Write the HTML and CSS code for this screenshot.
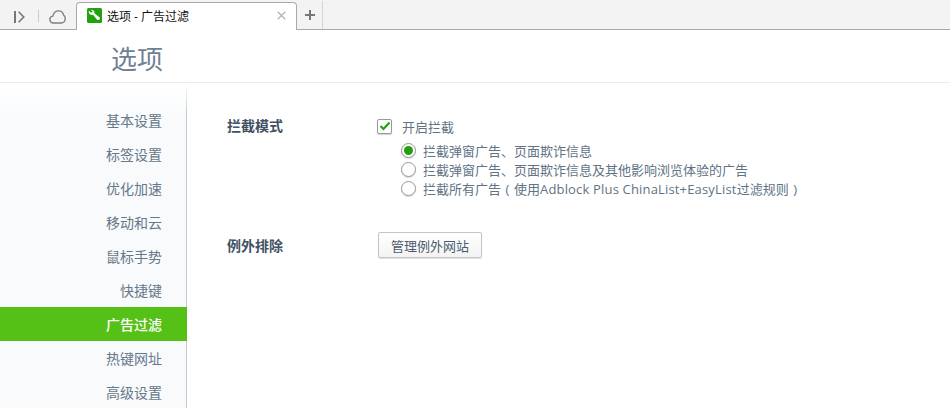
FILE: index.html
```html
<!DOCTYPE html>
<html lang="zh-CN">
<head>
<meta charset="utf-8">
<title>选项 - 广告过滤</title>
<link rel="stylesheet" href="styles.css">
</head>
<body>
<header class="tabstrip">
  <div class="tool tool-side">
    <svg width="11" height="12" viewBox="0 0 11 12"><path d="M1 0v12" stroke="#777" stroke-width="2" fill="none"/><path d="M4.600.7 9.800 6 4.600 11.300" stroke="#777" stroke-width="1.600" fill="none"/></svg>
  </div>
  <span class="tool-sep"></span>
  <div class="tool tool-cloud">
    <svg width="17" height="14" viewBox="0 0 17 14"><path d="M4.400 13C2.300 13 .8 11.400.8 9.500c0-1.800 1.300-3.200 3-3.400C4.500 3 6.800.9 9.500.9c2.500 0 4.500 1.700 5 4 1 .7 1.700 2.200 1.700 3.900 0 2.400-1.800 4.200-4 4.200Z" stroke="#7f7f7f" stroke-width="1.400" fill="none"/></svg>
  </div>
  <div class="tab">
    <svg class="tab-icon" width="15" height="15" viewBox="0 0 15 15"><rect width="15" height="15" rx="1.500" fill="#22a00e"/><path d="M3.600 1.800c1.900-.6 3.900.8 3.900 2.800 0 .2 0 .4-.1.600l5 4.100c1 .9.400 2.900-1.300 2.800-.5 0-.9-.2-1.200-.6L6 6.800C4 7.400 1.900 6 1.800 3.900c0-.4 0-.7.200-1.100l1.700 1.700 1.400-.3.300-1.200Z" fill="#fff"/></svg>
    <span class="tab-title">选项 - 广告过滤</span>
    <svg class="tab-close" width="9" height="9" viewBox="0 0 9 9"><path d="M.7.7l7.600 7.600M8.300.7.700 8.300" stroke="#b5b5b5" stroke-width="1.300" fill="none"/></svg>
  </div>
  <div class="newtab">
    <svg width="10" height="10" viewBox="0 0 10 10"><path d="M5 0v10M0 5h10" stroke="#777" stroke-width="2" fill="none"/></svg>
  </div>
  <div class="strip-rest"></div>
</header>

<div class="page-head"><h1 class="page-title">选项</h1></div>

<div class="body">
  <nav class="sidebar">
    <a class="nav-item">基本设置</a>
    <a class="nav-item">标签设置</a>
    <a class="nav-item">优化加速</a>
    <a class="nav-item">移动和云</a>
    <a class="nav-item">鼠标手势</a>
    <a class="nav-item">快捷键</a>
    <a class="nav-item active">广告过滤</a>
    <a class="nav-item">热键网址</a>
    <a class="nav-item">高级设置</a>
  </nav>
  <main class="content">
    <section class="row row-mode">
      <h2 class="label">拦截模式</h2>
      <div class="field">
        <label class="check">
          <span class="checkbox"><svg width="12" height="10" viewBox="0 0 12 10"><path d="M1.500 5 4.500 8 10.500 1.500" stroke="#22a00e" stroke-width="2.200" fill="none"/></svg></span>
          <span>开启拦截</span>
        </label>
        <div class="radios">
          <label class="radio-row"><span class="radio on"></span><span>拦截弹窗广告、页面欺诈信息</span></label>
          <label class="radio-row"><span class="radio"></span><span>拦截弹窗广告、页面欺诈信息及其他影响浏览体验的广告</span></label>
          <label class="radio-row"><span class="radio"></span><span>拦截所有广告<span class="paren">(</span>使用<span class="latin">Adblock Plus ChinaList+EasyList</span>过滤规则<span class="paren">)</span></span></label>
        </div>
      </div>
    </section>
    <section class="row row-except">
      <h2 class="label">例外排除</h2>
      <div class="field"><button class="btn" type="button">管理例外网站</button></div>
    </section>
  </main>
</div>
</body>
</html>
```
FILE: styles.css
```css
* { box-sizing: border-box; }
html, body { margin: 0; height: 100%; overflow: hidden; }
body {
  width: 950px;
  height: 408px;
  background: #fff;
  font-family: "Open Sans", "Noto Sans CJK SC", sans-serif;
  color: #5f7385;
  display: flex;
  flex-direction: column;
}
.tabstrip {
  height: 30px;
  flex: none;
  display: flex;
  align-items: flex-end;
  background: #f3f3f3;
  border-bottom: 1px solid #a9a9a9;
}
.tool { height: 29px; display: flex; align-items: center; justify-content: center; }
.tool-side { width: 38px; padding-top: 4px; }
.tool-sep { width: 1px; height: 12px; background: #ccc; margin-bottom: 7px; }
.tool-cloud { width: 36px; padding-top: 4px; padding-left: 1px; margin-right: 1px; }
.tab {
  width: 221px;
  height: 28px;
  margin-bottom: -1px;
  background: #fff;
  border: 1px solid #a9a9a9;
  border-bottom: 0;
  border-radius: 4px 4px 0 0;
  display: flex;
  align-items: center;
  padding: 0 10px 2px 10px;
}
.tab-icon { flex: none; margin-right: 5px; }
.tab-title { flex: 1; font-size: 12px; color: #111; white-space: nowrap; }
.tab-close { flex: none; }
.newtab {
  width: 26px;
  height: 28px;
  display: flex;
  align-items: center;
  justify-content: center;
  border-right: 1px solid #d5d5d5;
}
.strip-rest { flex: 1; }
.page-head {
  height: 53px;
  flex: none;
  border-bottom: 1px solid #ececec;
  padding-left: 111px;
}
.page-title {
  margin: 0;
  font-size: 26px;
  font-weight: 400;
  line-height: 58px;
  color: #6f8193;
}
.body { flex: 1; display: flex; min-height: 0; }
.sidebar {
  width: 187px;
  flex: none;
  display: flex;
  flex-direction: column;
  padding: 20px 1px 0 0;
  background:
    linear-gradient(to bottom, #fff 0, #c8c8c8 30px) right top / 1px 100% no-repeat,
    linear-gradient(to bottom, #fff 0, #f8fafc 40px, #f8fafc 100%);
}
.nav-item {
  height: 34px;
  flex: none;
  padding-right: 24px;
  text-align: right;
  font-size: 14px;
  line-height: 36px;
  color: #66788a;
}
.nav-item.active {
  background: #55c116;
  color: #fff;
  margin-right: -1px;
  padding-right: 25px;
  font-weight: 500;
}
.content { flex: 1; padding: 31px 0 0 40px; }
.row { display: flex; }
.row-except { margin-top: 34px; }
.label {
  width: 150px;
  flex: none;
  margin: 0;
  font-size: 14px;
  font-weight: 700;
  line-height: 24px;
  color: #3f5163;
}
.row-except .label { line-height: 28px; }
.field { font-size: 13px; }
.check { display: flex; align-items: center; height: 24px; }
.checkbox {
  width: 15px;
  height: 15px;
  margin-right: 10px;
  background: #fff;
  border: 1px solid #999;
  border-radius: 2px;
  box-shadow: 0 1px 1px rgba(0,0,0,.18);
  display: flex;
  align-items: center;
  justify-content: center;
}
.radios { padding: 3px 0 0 24px; display: flex; flex-direction: column; }
.radio-row { display: flex; align-items: center; height: 19px; white-space: nowrap; }
.radio {
  width: 15px;
  height: 15px;
  margin-right: 7px;
  border: 1px solid #999;
  border-radius: 50%;
  background: #fff;
  box-shadow: 0 1px 1px rgba(0,0,0,.15);
  display: flex;
  align-items: center;
  justify-content: center;
}
.radio.on::after {
  content: "";
  width: 9px;
  height: 9px;
  border-radius: 50%;
  background: #22a00e;
}
.paren { display: inline-block; width: 13px; text-align: center; }
.latin { letter-spacing: .17px; }
.btn {
  width: 104px;
  height: 26px;
  margin-left: 1px;
  padding: 0;
  font: inherit;
  font-size: 13px;
  color: #4a5c6e;
  background: linear-gradient(to bottom, #fff, #f3f3f3);
  border: 1px solid #c4c4c4;
  border-radius: 2px;
  box-shadow: 0 1px 1px rgba(0,0,0,.12);
}
```
